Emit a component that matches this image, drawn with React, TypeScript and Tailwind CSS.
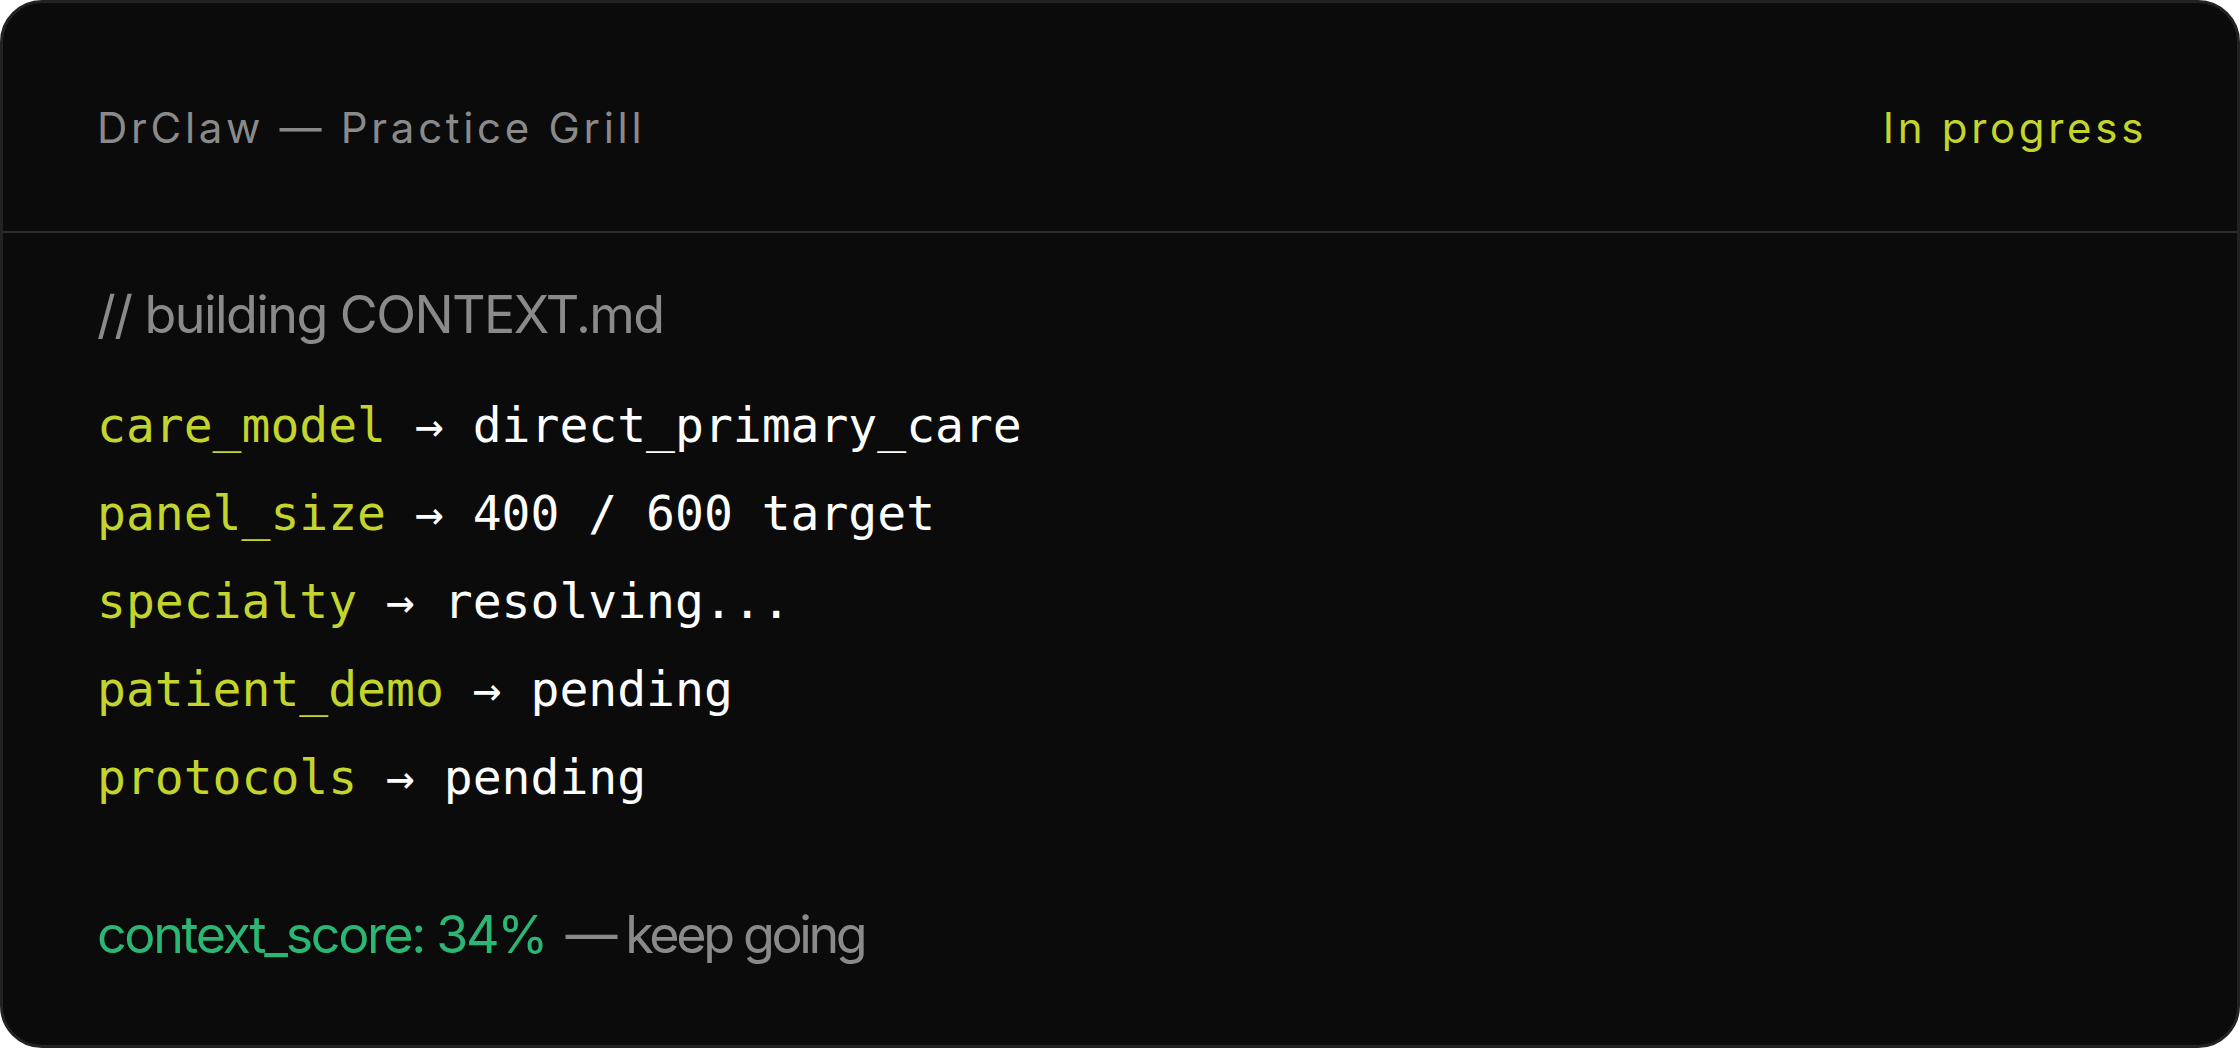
import React from "react";

const rows: [string, string][] = [
  ["care_model", "direct_primary_care"],
  ["panel_size", "400 / 600 target"],
  ["specialty", "resolving..."],
  ["patient_demo", "pending"],
  ["protocols", "pending"],
];

export default function App() {
  return (
    <div className="w-[2240px] h-[1048px] bg-white">
      <div className="w-full h-full rounded-[42px] border-[3px] border-[#232323] bg-[#0b0b0b] flex flex-col overflow-hidden">
        <div className="flex items-center justify-between pl-[94px] pr-[90px] pt-[104px] pb-[82px] border-b-2 border-[#2c2c2c] font-['Inter',sans-serif] text-[42px] leading-[42px] tracking-[0.088em]">
          <span className="text-[#8a8a8a]">DrClaw — Practice Grill</span>
          <span className="text-[#c3d52c]">In progress</span>
        </div>
        <div className="flex flex-col px-[94px] pt-[52px]">
          <div className="font-['Inter',sans-serif] text-[52px] leading-[60px] tracking-[-0.03em] text-[#8a8a8a]">
            // building CONTEXT.md
          </div>
          <div className="mt-[36px] flex flex-col font-['DejaVu_Sans_Mono',monospace] text-[48px] leading-[88px]">
            {rows.map(([k, v]) => (
              <div key={k} className="whitespace-pre">
                <span className="text-[#c3d52c]">{k}</span>
                <span className="text-white">{" → "}{v}</span>
              </div>
            ))}
          </div>
          <div className="mt-[84px] font-['Inter',sans-serif] text-[52px] leading-[60px] whitespace-pre">
            <span className="text-[#2bb673] tracking-[-0.045em]">context_score: 34%</span>
            <span className="text-[#8a8a8a] tracking-[-0.065em] ml-[-3px]">{"  — keep going"}</span>
          </div>
        </div>
      </div>
    </div>
  );
}
